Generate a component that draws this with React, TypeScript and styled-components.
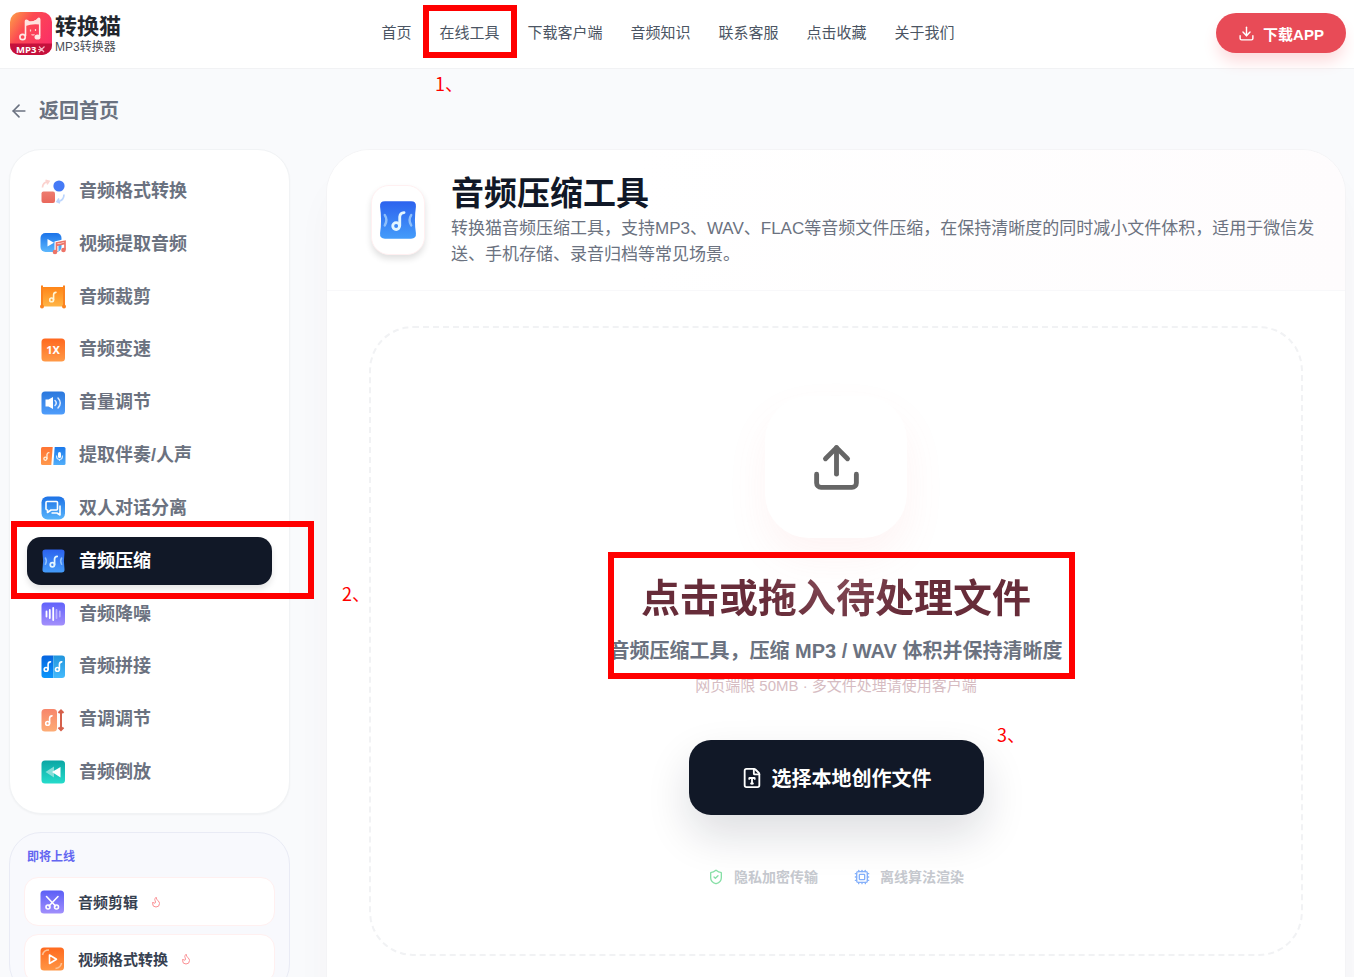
import React from 'react';
import styled, { createGlobalStyle } from 'styled-components';
import { ArrowLeft, Cpu, Download, FileType, Flame, ShieldCheck, Upload } from 'lucide-react';

const GlobalStyle = createGlobalStyle`
  *, *::before, *::after { box-sizing: border-box; }
  html { overflow: hidden; height: 100%; }
  body {
    margin: 0;
    height: 100%;
    overflow: hidden;
    background: #f9fafc;
    color: #6b7280;
    font-family: "Liberation Sans", "Noto Sans CJK SC", sans-serif;
  }
  a { color: inherit; text-decoration: none; }
  button { font-family: inherit; border: 0; cursor: pointer; }
  h1, h2, h3, p, ul { margin: 0; padding: 0; }
  ul { list-style: none; }
`;

const Page = styled.div`
  position: relative;
  min-height: 100vh;
`;

const Header = styled.header`
  display: flex;
  align-items: center;
  justify-content: space-between;
  height: 69px;
  padding: 0 8px 2px 10px;
  background: #fff;
  border-bottom: 1px solid #f1f2f4;
`;

const Brand = styled.a`
  display: flex;
  align-items: center;
  gap: 3px;
  width: 110px;
  svg { flex: none; }
`;

const BrandText = styled.span`
  display: flex;
  flex-direction: column;
  padding-top: 4px;
  white-space: nowrap;
`;

const BrandName = styled.strong`
  font-size: 22px;
  line-height: 24px;
  color: #22262d;
`;

const BrandSub = styled.span`
  font-size: 12px;
  line-height: 16px;
  color: #4b4f57;
`;

const NavList = styled.ul`
  display: flex;
  gap: 28px;
  font-size: 15px;
  line-height: 24px;
  color: #4b5563;
  white-space: nowrap;
`;

const AppButton = styled.button`
  display: flex;
  align-items: center;
  justify-content: center;
  gap: 8px;
  width: 130px;
  height: 40px;
  border-radius: 20px;
  background: #e84b57;
  color: #fff;
  font-size: 15px;
  font-weight: 700;
  box-shadow: 0 10px 16px -2px #fdd9db;
`;

const BackLink = styled.a`
  display: inline-flex;
  align-items: center;
  gap: 10px;
  margin: 28px 0 24px 9px;
  font-size: 20px;
  line-height: 28px;
  font-weight: 700;
`;

const Columns = styled.div`
  display: flex;
  align-items: flex-start;
  gap: 36px;
  padding: 0 8px 0 9px;
`;

const Sidebar = styled.aside`
  flex: none;
  display: flex;
  flex-direction: column;
  gap: 18px;
  width: 281px;
`;

const ToolCard = styled.nav`
  padding: 17px;
  border: 1px solid #f1f3f5;
  border-radius: 32px;
  background: #fff;
  box-shadow: 0 1px 2px rgba(0, 0, 0, 0.04);
`;

const ToolList = styled.ul`
  display: flex;
  flex-direction: column;
  justify-content: space-between;
  min-height: 629px;
`;

const ToolLink = styled.a<{ $active?: boolean }>`
  display: flex;
  align-items: center;
  gap: 12px;
  height: 48px;
  padding: 0 13px;
  border-radius: 14px;
  font-size: 18px;
  line-height: 24px;
  font-weight: 700;
  background: ${(p) => (p.$active ? '#111827' : 'transparent')};
  color: ${(p) => (p.$active ? '#fff' : '#6b7280')};
  box-shadow: ${(p) => (p.$active ? '0 4px 6px rgba(0, 0, 0, 0.1)' : 'none')};
`;

const SoonCard = styled.section`
  padding: 12px 14px;
  border: 1px solid #e9ebf5;
  border-radius: 32px;
  background: #f8f9fd;
`;

const SoonTitle = styled.h3`
  padding: 0 3px;
  margin-bottom: 8px;
  font-size: 12px;
  line-height: 24px;
  color: #6366f1;
`;

const SoonList = styled.ul`
  display: grid;
  gap: 8px;
`;

const SoonLink = styled.a`
  display: flex;
  align-items: center;
  gap: 12px;
  height: 49px;
  padding: 0 14px;
  border: 1px solid #fff0f0;
  border-radius: 14px;
  background: #fff;
  color: #374151;
  font-size: 15px;
  font-weight: 700;
`;

const Main = styled.main`
  flex: 1;
  min-width: 0;
  border: 1px solid #f4f4f6;
  border-radius: 44px;
  background: #fff;
  box-shadow: 0 32px 36px rgba(90, 20, 20, 0.03);
  overflow: hidden;
`;

const MainHead = styled.div`
  display: flex;
  align-items: center;
  gap: 26px;
  height: 141px;
  padding: 0 16px 0 44px;
  border-bottom: 1px solid #f8f8fa;
  background: linear-gradient(90deg, #fff 30%, #fefcfd);
`;

const HeadIcon = styled.div`
  flex: none;
  display: flex;
  align-items: center;
  justify-content: center;
  width: 54px;
  height: 70px;
  border: 1px solid #fff0f1;
  border-radius: 18px;
  background: #fff;
  box-shadow: 0 4px 6px rgba(0, 0, 0, 0.12);
`;

const Title = styled.h1`
  font-size: 33px;
  line-height: 44px;
  color: #111827;
`;

const Description = styled.p`
  font-size: 17px;
  line-height: 26px;
`;

const DropZone = styled.section`
  display: flex;
  flex-direction: column;
  align-items: center;
  margin: 35px 42px 88px;
  padding: 68px 0 67px;
  border: 2px dashed #f1f2f4;
  border-radius: 44px;
  text-align: center;
`;

const UploadTile = styled.div`
  display: flex;
  align-items: center;
  justify-content: center;
  width: 142px;
  height: 142px;
  border-radius: 44px;
  background: #fff;
  color: #666;
  box-shadow: 0 20px 40px rgba(248, 113, 113, 0.08);
`;

const DropTitle = styled.h2`
  margin-top: 39px;
  font-size: 39px;
  line-height: 44px;
  color: transparent;
  background: radial-gradient(circle at 50% -20px, #8c5460, #672c39 84px);
  background-clip: text;
  -webkit-background-clip: text;
`;

const DropSubtitle = styled.p`
  margin-top: 16px;
  font-size: 20px;
  line-height: 28px;
  font-weight: 700;
`;

const DropHint = styled.p`
  margin-top: 10px;
  font-size: 15px;
  line-height: 22px;
  color: #d6bcc2;
`;

const PickButton = styled.button`
  display: flex;
  align-items: center;
  justify-content: center;
  gap: 9px;
  width: 295px;
  height: 75px;
  margin-top: 43px;
  border-radius: 22px;
  background: #111827;
  color: #fff;
  font-size: 20px;
  font-weight: 700;
  box-shadow: 0 20px 44px rgba(17, 24, 39, 0.14);
`;

const Badges = styled.ul`
  display: flex;
  gap: 36px;
  margin-top: 52px;
  font-size: 14px;
  line-height: 20px;
  font-weight: 700;
  color: #c5c8ce;
`;

const Badge = styled.li`
  display: flex;
  align-items: center;
  gap: 10px;
`;

const MarkFrame = styled.div<{ $x: number; $y: number; $w: number; $h: number }>`
  position: absolute;
  left: ${(p) => p.$x}px;
  top: ${(p) => p.$y}px;
  width: ${(p) => p.$w}px;
  height: ${(p) => p.$h}px;
  border: 6px solid #f00;
  pointer-events: none;
`;

const MarkLabel = styled.span<{ $x: number; $y: number }>`
  position: absolute;
  left: ${(p) => p.$x}px;
  top: ${(p) => p.$y}px;
  font-family: "Noto Sans CJK SC", sans-serif;
  font-size: 18px;
  line-height: 24px;
  color: #f00;
`;

const Note = ({ x = 0, y = 0, s = 1, color = '#fff' }: { x?: number; y?: number; s?: number; color?: string }) => (
  <g transform={`translate(${x} ${y}) scale(${s})`} fill="none" stroke={color} strokeWidth="1.6" strokeLinecap="round">
    <circle cx="2.6" cy="8.4" r="1.9" />
    <path d="M4.6 8.2V3.2Q4.8 1 7 .9" />
  </g>
);

const Grad = ({ id, from, to }: { id: string; from: string; to: string }) => (
  <linearGradient id={id} x1="0" y1="0" x2="0" y2="1">
    <stop offset="0" stopColor={from} />
    <stop offset="1" stopColor={to} />
  </linearGradient>
);

const Tile = ({ id, from, to, children }: { id: string; from: string; to: string; children?: React.ReactNode }) => (
  <>
    <defs><Grad id={id} from={from} to={to} /></defs>
    <rect x="1.5" y="1.5" width="23.5" height="23" rx="3.5" fill={`url(#${id})`} />
    {children}
  </>
);

const CompressArt = ({ id }: { id: string }) => (
  <>
    <defs><Grad id={id} from="#2c62ee" to="#449cfa" /></defs>
    <path d="M5.500 1.500H21.500Q24.800 1.500 24.500 4.800Q23.300 13 24.500 21.200Q24.800 24.500 21.500 24.500H5.500Q2.200 24.500 2.500 21.200Q3.700 13 2.500 4.800Q2.200 1.500 5.500 1.500Z" fill={`url(#${id})`} />
    <Note x={9.5} y={7.5} s={1.1} color="#e3f6ff" />
    <path d="M5.400 10Q7.400 13 5.400 16.300M21.600 10Q19.600 13 21.600 16.300" fill="none" stroke="#8fc0fb" strokeWidth="1.500" strokeLinecap="round" />
  </>
);

const art: Record<string, React.ReactNode> = {
  convert: (
    <>
      <defs><Grad id="cv" from="#ed7c70" to="#e9675b" /></defs>
      <path d="M2.500 8.500Q2.500 3.500 8 2.600M5.500 1.200 9 2.300 7 5.400" fill="none" stroke="#fbd3cf" strokeWidth="1.700" />
      <circle cx="19" cy="7" r="5.600" fill="#457af6" />
      <rect x="1.500" y="12.500" width="13.500" height="11.500" rx="2" fill="url(#cv)" />
      <path d="M24 15.500Q24 21 18.500 22.500M19 19.500 17 22.600 20 24" fill="none" stroke="#bcd5fd" strokeWidth="1.700" />
    </>
  ),
  video: (
    <>
      <defs><Grad id="vd" from="#1b73e9" to="#5cb7fd" /></defs>
      <rect x="0.500" y="2" width="21" height="19" rx="5" fill="url(#vd)" />
      <path d="M7.500 8v7.500L14 11.700Z" fill="#fff" />
      <g stroke="#fff" strokeWidth="4" fill="none"><path d="M16.500 20V12L25 10v9" /></g>
      <path d="M16.500 20.500V12L25 10.200v8.500M16.500 14.300 25 12.400" fill="none" stroke="#ed7468" strokeWidth="1.700" />
      <circle cx="15" cy="21" r="2.300" fill="#ed7468" />
      <circle cx="23.500" cy="19" r="2.300" fill="#ed7468" />
    </>
  ),
  trim: (
    <>
      <defs><Grad id="tr" from="#ff8518" to="#ffb545" /></defs>
      <rect x="2.500" y="3" width="21.500" height="19.500" fill="url(#tr)" />
      <path d="M2 1.500V22M24 1.500V22" stroke="#fb831f" strokeWidth="2" />
      <circle cx="2" cy="22.500" r="2" fill="#fb831f" />
      <circle cx="24" cy="22.500" r="2" fill="#fb831f" />
      <Note x={9} y={7.500} color="#fff5d5" />
    </>
  ),
  speed: (
    <Tile id="sp" from="#ff681f" to="#ff9a47">
      <text x="13" y="17" textAnchor="middle" fontSize="11" fontWeight="700" fill="#fff" fontFamily="Noto Sans, sans-serif">1X</text>
    </Tile>
  ),
  volume: (
    <Tile id="vo" from="#2b78dd" to="#4f9dfb">
      <path d="M5.500 9.500h3L13 7v12l-4.500-2.500h-3Z" fill="#fff" />
      <path d="M15 10.500q2.500 2.500 0 5M18 8q4.500 5 0 10" fill="none" stroke="#dceafe" strokeWidth="1.500" strokeLinecap="round" />
    </Tile>
  ),
  vocal: (
    <>
      <defs><Grad id="v1" from="#ff7433" to="#ff984c" /><Grad id="v2" from="#1b79eb" to="#51aefa" /></defs>
      <path d="M2.500 4H12.700L11.300 22H2.500Q1 22 1 20.500V5.500Q1 4 2.500 4Z" fill="url(#v1)" />
      <path d="M14.700 4H24Q25.500 4 25.500 5.500V20.500Q25.500 22 24 22H13.300Z" fill="url(#v2)" />
      <Note x={3.300} y={9} s={0.800} color="#fff2df" />
      <rect x="18" y="9" width="3" height="6" rx="1.500" fill="#fff" />
      <path d="M16.500 12.500q0 4 3 4t3-4M19.500 16.500v1.500" fill="none" stroke="#cfe7ff" strokeWidth="1.200" />
    </>
  ),
  dialog: (
    <>
      <defs><Grad id="dg" from="#1d72e6" to="#58b4fb" /></defs>
      <rect x="1.500" y="1.500" width="23.500" height="23" rx="6" fill="url(#dg)" />
      <path d="M7 6.500h9.500q1 0 1 1V14q0 1-1 1H11L7.500 17.500V15Q6 15 6 14V7.500q0-1 1-1Z" fill="none" stroke="#fff" strokeWidth="1.600" strokeLinejoin="round" />
      <path d="M20 10.500V20l-3-2H11.500" fill="none" stroke="#fff" strokeWidth="1.600" strokeLinejoin="round" />
    </>
  ),
  compress: <CompressArt id="cs" />,
  denoise: (
    <Tile id="dn" from="#6062fb" to="#a38ffb">
      <path d="M6.500 10.500v5M9.800 9v8M13.200 7v12" stroke="#fff" strokeWidth="1.800" strokeLinecap="round" />
      <path d="M16.500 9v8M19.800 10.500v5" stroke="#b9b2fe" strokeWidth="1.800" strokeLinecap="round" />
    </Tile>
  ),
  join: (
    <>
      <defs><Grad id="j1" from="#0764df" to="#0a96fb" /><Grad id="j2" from="#2195dc" to="#45bafc" /></defs>
      <path d="M4.500 1.500H13.300V24H4.500Q1.500 24 1.500 21V4.500Q1.500 1.500 4.500 1.500Z" fill="url(#j1)" />
      <path d="M13.300 1.500H22Q25 1.500 25 4.500V21Q25 24 22 24H13.300Z" fill="url(#j2)" />
      <Note x={3.500} y={7} />
      <Note x={14.800} y={7} />
    </>
  ),
  pitch: (
    <>
      <defs><Grad id="pt" from="#f7866b" to="#fdac75" /></defs>
      <rect x="1.500" y="2" width="15.500" height="22.500" rx="3.500" fill="url(#pt)" />
      <Note x={5} y={8} />
      <path d="M21 4v18M18.500 6 21 3.500 23.500 6M18.500 20.500l2.500 2.500 2.500-2.500" fill="none" stroke="#d5604b" strokeWidth="2" />
    </>
  ),
  reverse: (
    <Tile id="rv" from="#0ba6a4" to="#25dccb">
      <path d="M5.500 13 14 7.500v11Z" fill="#86dfd9" />
      <path d="M12 13 20.500 8v10.500Z" fill="#fff" />
    </Tile>
  ),
  cut: (
    <Tile id="ct" from="#5b5ff6" to="#a18ffc">
      <g fill="none" stroke="#fff" strokeWidth="1.600" strokeLinecap="round">
        <path d="M7.500 7.500 16.500 17M19 7.500 10 17" />
        <circle cx="9" cy="18" r="2" />
        <circle cx="17.500" cy="18" r="2" />
      </g>
    </Tile>
  ),
  format: (
    <Tile id="fm" from="#ff6a1f" to="#ff9645">
      <path d="M10.500 9v8.500l7-4.200Z" fill="none" stroke="#fff" strokeWidth="1.600" strokeLinejoin="round" />
      <path d="M3.500 9Q4.500 4 10 4M22.500 17Q22 21.500 16.500 22.500" fill="none" stroke="#ffc295" strokeWidth="1.600" />
    </Tile>
  ),
};

const ToolIcon = ({ name }: { name: string }) => (
  <svg width="27" height="27" viewBox="0 -1 27 27" aria-hidden="true">{art[name]}</svg>
);

const Logo = () => (
  <svg width="42" height="43" viewBox="0 0 42 43" aria-hidden="true">
    <defs>
      <linearGradient id="lg" x1="0" y1="0" x2="1" y2="0.700">
        <stop offset="0" stopColor="#fda348" />
        <stop offset="0.400" stopColor="#fc4a52" />
        <stop offset="1" stopColor="#fb2e68" />
      </linearGradient>
      <clipPath id="lc"><rect width="42" height="43" rx="10" /></clipPath>
    </defs>
    <g clipPath="url(#lc)">
      <rect width="42" height="43" fill="url(#lg)" />
      <path d="M0 31.500h42V43H0Z" fill="#c5113c" />
      <path d="M15.500 24V9.500Q15.500 8 17 8.500L19 10Q23 10.800 26.500 8.500L28.500 6.500Q29.700 6 29.700 8V24" fill="none" stroke="#ffe9e5" strokeWidth="1.600" />
      <path d="M15.500 9Q15 7.500 17 8.300L19.500 9.500Q23 9.500 26 8L28.500 6.300Q30 6 29.700 8V12.500Q22 11.500 15.500 14Z" fill="#ffe2de" />
      <circle cx="12.600" cy="25" r="2.700" fill="none" stroke="#ffe9e5" strokeWidth="1.700" />
      <ellipse cx="27.500" cy="25" rx="3" ry="2.600" fill="#ffe9e5" />
      <path d="M20.500 17.500v2M25.500 17v2M21.500 22.500q1.500 1 3 0" stroke="#ffd0cd" strokeWidth="1.200" fill="none" />
      <text x="6" y="40.500" fontSize="9.500" fontWeight="700" fill="#fff" fontFamily="Open Sans, sans-serif">MP3</text>
      <path d="M29 34.500 34 40M34.500 34.500 29 40M28 37.500h3" stroke="#f7b8c5" strokeWidth="1.200" />
    </g>
  </svg>
);

const navItems = ['首页', '在线工具', '下载客户端', '音频知识', '联系客服', '点击收藏', '关于我们'];

const tools = [
  { icon: 'convert', label: '音频格式转换' },
  { icon: 'video', label: '视频提取音频' },
  { icon: 'trim', label: '音频裁剪' },
  { icon: 'speed', label: '音频变速' },
  { icon: 'volume', label: '音量调节' },
  { icon: 'vocal', label: '提取伴奏/人声' },
  { icon: 'dialog', label: '双人对话分离' },
  { icon: 'compress', label: '音频压缩', active: true },
  { icon: 'denoise', label: '音频降噪' },
  { icon: 'join', label: '音频拼接' },
  { icon: 'pitch', label: '音调调节' },
  { icon: 'reverse', label: '音频倒放' },
];

const soon = [
  { icon: 'cut', label: '音频剪辑' },
  { icon: 'format', label: '视频格式转换' },
];

export default function App() {
  return (
    <Page>
      <GlobalStyle />
      <Header>
        <Brand href="#">
          <Logo />
          <BrandText>
            <BrandName>转换猫</BrandName>
            <BrandSub>MP3转换器</BrandSub>
          </BrandText>
        </Brand>
        <nav>
          <NavList>
            {navItems.map((label) => (
              <li key={label}><a href="#">{label}</a></li>
            ))}
          </NavList>
        </nav>
        <AppButton type="button">
          <Download size={17} />
          下载APP
        </AppButton>
      </Header>

      <BackLink href="#">
        <ArrowLeft size={20} />
        返回首页
      </BackLink>

      <Columns>
        <Sidebar>
          <ToolCard>
            <ToolList>
              {tools.map((t) => (
                <li key={t.label}>
                  <ToolLink href="#" $active={t.active}>
                    <ToolIcon name={t.icon} />
                    {t.label}
                  </ToolLink>
                </li>
              ))}
            </ToolList>
          </ToolCard>
          <SoonCard>
            <SoonTitle>即将上线</SoonTitle>
            <SoonList>
              {soon.map((t) => (
                <li key={t.label}>
                  <SoonLink href="#">
                    <ToolIcon name={t.icon} />
                    {t.label}
                    <Flame size={12} color="#fb8f93" />
                  </SoonLink>
                </li>
              ))}
            </SoonList>
          </SoonCard>
        </Sidebar>

        <Main>
          <MainHead>
            <HeadIcon>
              <svg width="44" height="44" viewBox="0 0 27 26" aria-hidden="true"><CompressArt id="hd" /></svg>
            </HeadIcon>
            <div>
              <Title>音频压缩工具</Title>
              <Description>
                转换猫音频压缩工具，支持MP3、WAV、FLAC等音频文件压缩，在保持清晰度的同时减小文件体积，适用于微信发送、手机存储、录音归档等常见场景。
              </Description>
            </div>
          </MainHead>
          <DropZone>
            <UploadTile><Upload size={53} strokeWidth={2.2} /></UploadTile>
            <DropTitle>点击或拖入待处理文件</DropTitle>
            <DropSubtitle>音频压缩工具，压缩 MP3 / WAV 体积并保持清晰度</DropSubtitle>
            <DropHint>网页端限 50MB · 多文件处理请使用客户端</DropHint>
            <PickButton type="button">
              <FileType size={22} />
              选择本地创作文件
            </PickButton>
            <Badges>
              <Badge><ShieldCheck size={16} color="#86dfa6" />隐私加密传输</Badge>
              <Badge><Cpu size={16} color="#85b0fa" />离线算法渲染</Badge>
            </Badges>
          </DropZone>
        </Main>
      </Columns>

      <MarkFrame $x={423} $y={5} $w={94} $h={53} />
      <MarkLabel $x={435} $y={71}>1、</MarkLabel>
      <MarkFrame $x={11} $y={521} $w={303} $h={78} />
      <MarkLabel $x={342} $y={581}>2、</MarkLabel>
      <MarkFrame $x={608} $y={552} $w={467} $h={127} />
      <MarkLabel $x={997} $y={722}>3、</MarkLabel>
    </Page>
  );
}
